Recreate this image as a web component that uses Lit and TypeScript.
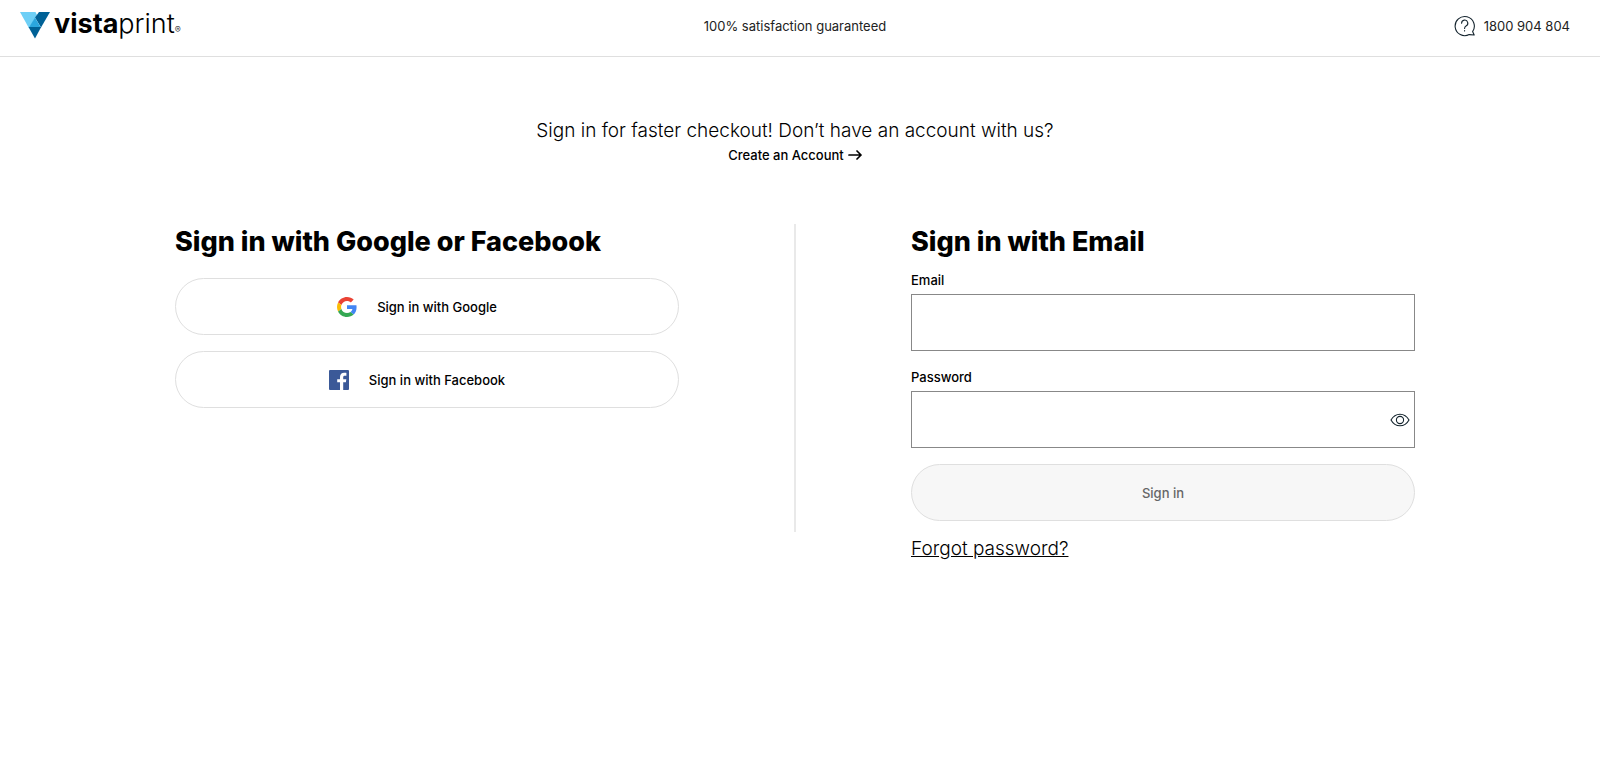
import { LitElement, html, css, svg } from "lit";
import { customElement, state } from "lit/decorators.js";

const brandMark = svg`
  <path d="M0 0H15.5L17 3L9.5 15.5H8.6Z" fill="#6dcff6"></path>
  <path d="M19 0H30L21 15.5L15 5.5Z" fill="#006196"></path>
  <path d="M15 5.5L20.5 15H9.2Z" fill="#2ba6de"></path>
  <path d="M8.5 15H21.2L15 26.5Z" fill="#006196"></path>`;

@customElement("app-root")
export class AppRoot extends LitElement {
  @state() private showPassword = false;

  static styles = css`
    :host {
      display: block;
      min-height: 100vh;
      background: #fff;
      color: #000;
      font-family: Inter, "Liberation Sans", sans-serif;
      font-size: 13px;
      line-height: 20px;
    }
    * { box-sizing: border-box; }
    a { color: inherit; text-decoration: none; }
    svg { display: block; flex: none; }
    .header {
      display: grid;
      grid-template-columns: 1fr auto 1fr;
      align-items: center;
      height: 57px;
      padding: 0 30px 4px 20px;
      border-bottom: 1px solid #dfdfdf;
    }
    .brand {
      display: flex;
      align-items: center;
      gap: 4px;
      justify-self: start;
      padding-bottom: 2px;
      font-size: 27px;
      line-height: 32px;
    }
    .wordmark { padding-top: 4px; font-weight: 300; }
    .strong { font-weight: 700; }
    .mark { font-size: 9px; }
    .guarantee { font-weight: 400; color: #222; }
    .phone {
      display: flex;
      align-items: center;
      gap: 8px;
      justify-self: end;
      color: #222;
    }
    .main {
      max-width: 1290px;
      margin: 0 auto;
      padding: 61px 30px 40px 20px;
    }
    .intro {
      display: flex;
      flex-direction: column;
      align-items: center;
      text-align: center;
    }
    .lead { margin: 0; font-size: 19px; line-height: 26px; font-weight: 300; }
    .create { display: flex; align-items: center; gap: 4px; line-height: 22px; font-weight: 500; }
    .columns {
      display: grid;
      grid-template-columns: 1fr 2px 1fr;
      column-gap: 115px;
      align-items: start;
      padding-top: 58px;
    }
    .divider { height: 308px; background: #e9e9e9; }
    .title { margin: 0; font-size: 27px; line-height: 36px; font-weight: 850; }
    .social { display: grid; gap: 16px; padding-top: 18px; }
    .pill {
      display: flex;
      align-items: center;
      justify-content: center;
      gap: 20px;
      width: 100%;
      height: 57px;
      padding: 0;
      border: 1px solid #dfdfdf;
      border-radius: 29px;
      background: #fff;
      color: #000;
      font: inherit;
      font-weight: 500;
    }
    .provider { padding-right: 20px; }
    .pill:disabled { background: #f7f7f7; color: #666; }
    .form { display: grid; padding-top: 10px; }
    .label { font-weight: 500; line-height: 20px; padding-bottom: 4px; }
    .field { position: relative; margin-bottom: 16px; }
    .email { margin-bottom: 16px; }
    .input {
      display: block;
      width: 100%;
      height: 57px;
      padding: 0 16px;
      border: 1px solid #888;
      border-radius: 0;
      background: #fff;
      font: inherit;
      font-size: 19px;
    }
    .eye {
      position: absolute;
      right: 5px;
      top: 18px;
      padding: 0;
      border: 0;
      background: none;
    }
    .forgot {
      justify-self: start;
      margin-top: 14px;
      font-size: 19px;
      line-height: 28px;
      font-weight: 300;
      text-decoration: underline;
    }
  `;

  render() {
    return html`
      <header class="header">
        <a class="brand" href="#" aria-label="vistaprint">
          <svg width="30" height="27" viewBox="0 0 30 27">${brandMark}</svg>
          <span class="wordmark"><span class="strong">vista</span>print<span class="mark">®</span></span>
        </a>
        <span class="guarantee">100% satisfaction guaranteed</span>
        <a class="phone" href="tel:1800904804">
          <svg width="22" height="22" viewBox="0 0 22 22" fill="none" stroke="#14242e" stroke-width="1.1" stroke-linecap="round" stroke-linejoin="round">
            <path d="M18.6 16.6A9.6 9.6 0 1 0 15.2 19.6L20.2 20Z"></path>
            <path d="M7.6 8.2A3.1 3.1 0 1 1 12 11C10.9 11.6 10.6 12.2 10.6 13.4"></path>
            <path d="M10.6 15.6V16"></path>
          </svg>
          <span>1800 904 804</span>
        </a>
      </header>
      <main class="main">
        <div class="intro">
          <p class="lead">Sign in for faster checkout! Don’t have an account with us?</p>
          <a class="create" href="#">Create an Account
            <svg width="14" height="10" viewBox="0 0 14 10" fill="none" stroke="#000" stroke-width="1.7" stroke-linecap="round" stroke-linejoin="round">
              <path d="M1 5H13M9 1L13 5L9 9"></path>
            </svg>
          </a>
        </div>
        <div class="columns">
          <section>
            <h2 class="title">Sign in with Google or Facebook</h2>
            <div class="social">
              <button class="pill provider" type="button">
                <svg width="20" height="20" viewBox="0 0 48 48">
                  <path fill="#EA4335" d="M24 9.5c3.54 0 6.71 1.22 9.21 3.6l6.85-6.85C35.9 2.38 30.47 0 24 0 14.62 0 6.51 5.38 2.56 13.22l7.98 6.19C12.43 13.72 17.74 9.5 24 9.5z"></path>
                  <path fill="#4285F4" d="M46.98 24.55c0-1.57-.15-3.09-.38-4.55H24v9.02h12.94c-.58 2.96-2.26 5.48-4.78 7.18l7.73 6c4.51-4.18 7.09-10.36 7.09-17.65z"></path>
                  <path fill="#FBBC05" d="M10.53 28.59c-.48-1.45-.76-2.99-.76-4.59s.27-3.14.76-4.59l-7.98-6.19C.92 16.46 0 20.12 0 24c0 3.88.92 7.54 2.56 10.78l7.97-6.19z"></path>
                  <path fill="#34A853" d="M24 48c6.48 0 11.93-2.13 15.89-5.81l-7.73-6c-2.15 1.45-4.92 2.3-8.16 2.3-6.26 0-11.57-4.22-13.47-9.91l-7.98 6.19C6.51 42.62 14.62 48 24 48z"></path>
                </svg>
                Sign in with Google
              </button>
              <button class="pill provider" type="button">
                <svg width="20" height="20" viewBox="0 0 20 20">
                  <rect width="20" height="20" rx="1" fill="#3b5998"></rect>
                  <path fill="#fff" d="M11 20V12.3H8.2V9.2H11V7C11 4.3 12.7 2.8 15.1 2.8C16.2 2.8 17.2 2.9 17.4 2.9V5.7H15.8C14.5 5.7 14.2 6.4 14.2 7.3V9.2H17.3L16.9 12.3H14.2V20Z"></path>
                </svg>
                Sign in with Facebook
              </button>
            </div>
          </section>
          <div class="divider"></div>
          <section>
            <h2 class="title">Sign in with Email</h2>
            <form class="form">
              <label class="label" for="email">Email</label>
              <input class="input email" id="email" type="email" />
              <label class="label" for="password">Password</label>
              <div class="field">
                <input class="input" id="password" type=${this.showPassword ? "text" : "password"} />
                <button class="eye" type="button" aria-label="Show password"
                  @click=${() => (this.showPassword = !this.showPassword)}>
                  <svg width="20" height="22" viewBox="0 0 20 22" fill="none" stroke="#14242e" stroke-width="1.1">
                    <path d="M1 11C3 7.4 6.3 5.2 10 5.2S17 7.4 19 11C17 14.6 13.7 16.8 10 16.8S3 14.6 1 11Z"></path>
                    <circle cx="10" cy="11" r="3.6"></circle>
                  </svg>
                </button>
              </div>
              <button class="pill" type="submit" disabled>Sign in</button>
              <a class="forgot" href="#">Forgot password?</a>
            </form>
          </section>
        </div>
      </main>
    `;
  }
}
